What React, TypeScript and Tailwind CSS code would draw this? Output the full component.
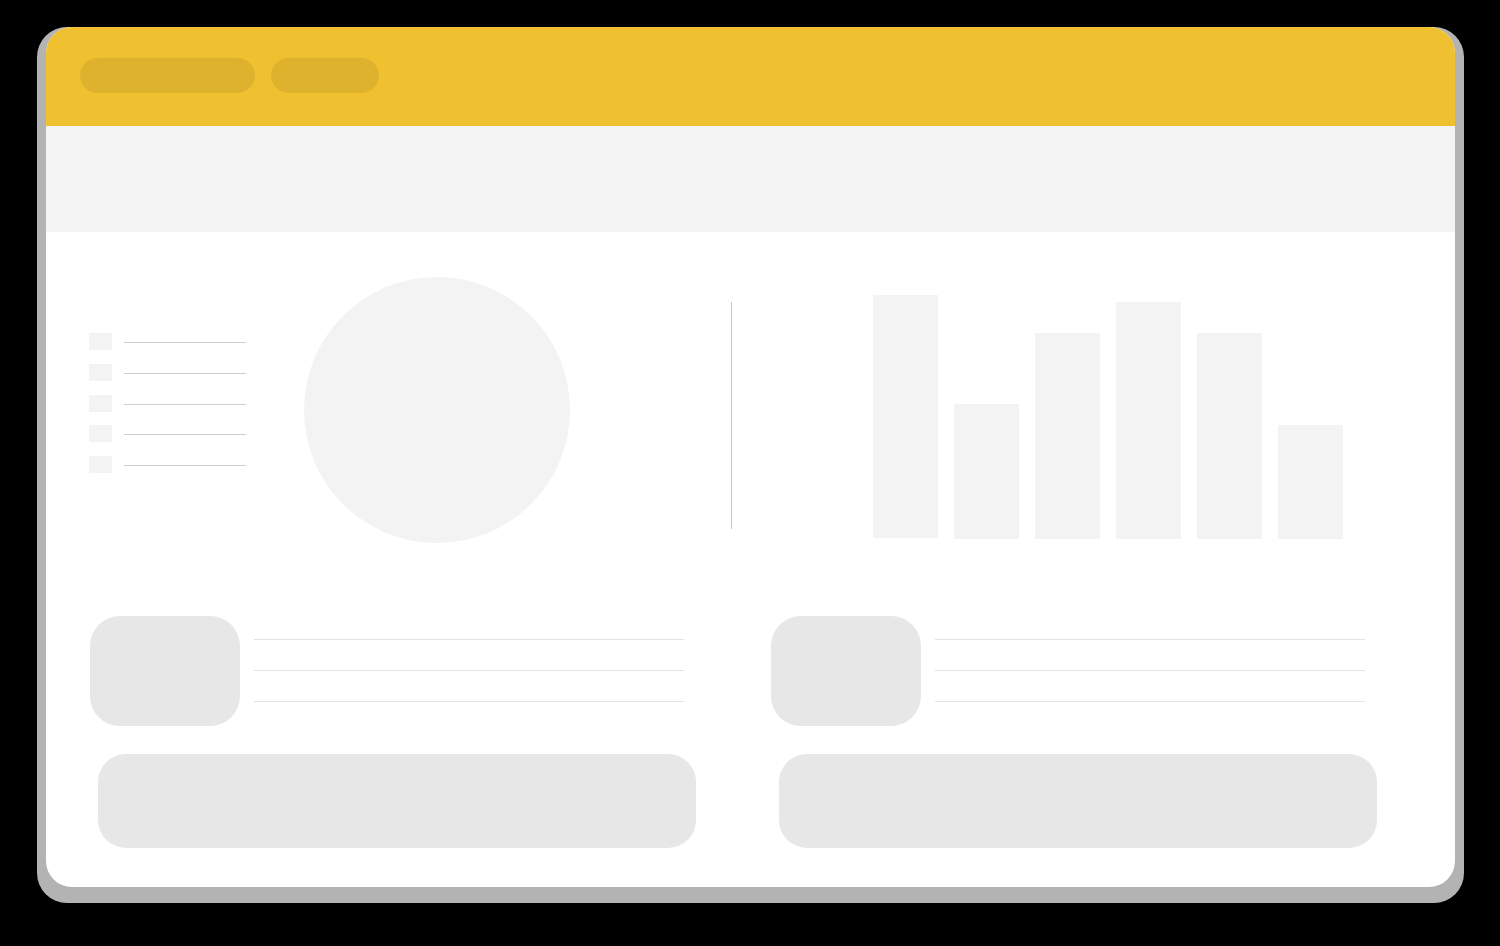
import React from "react";

// top margin of each legend row (pitch is 31/31/30/31 in the mock)
const legend = ["mt-0", "mt-[14px]", "mt-[14px]", "mt-[13px]", "mt-[14px]"];
const bars = [
  { h: "h-[243px] mb-px" },
  { h: "h-[135px]" },
  { h: "h-[206px]" },
  { h: "h-[237px]" },
  { h: "h-[206px]" },
  { h: "h-[114px]" },
];

function InfoBlock() {
  return (
    <div className="flex w-[606px] flex-col">
      <div className="flex">
        <div className="h-[110px] w-[150px] rounded-[30px] bg-[#e7e7e7]" />
        {/* text placeholder lines */}
        <div className="ml-[14px] flex flex-col gap-[30px] pt-[23px]">
          <div className="h-px w-[430px] bg-[#e3e3e3]" />
          <div className="h-px w-[430px] bg-[#e3e3e3]" />
          <div className="h-px w-[430px] bg-[#e3e3e3]" />
        </div>
      </div>
      <div className="ml-[8px] mt-[28px] h-[94px] w-[598px] rounded-[28px] bg-[#e7e7e7]" />
    </div>
  );
}

export default function App() {
  return (
    <div className="h-[946px] w-[1500px] overflow-hidden bg-black pt-[27px] pl-[37px]">
      {/* shadow frame */}
      <div className="h-[876px] w-[1427px] rounded-[30px] bg-[#b3b3b3]">
        <div className="ml-[9px] h-[860px] w-[1409px] overflow-hidden rounded-[26px] bg-white">
          {/* top bar */}
          <div className="flex h-[99px] gap-4 bg-[#efc130] pl-[34px] pt-[31px]">
            <div className="h-[35px] w-[175px] rounded-full bg-[#dfb22e]" />
            <div className="h-[35px] w-[108px] rounded-full bg-[#dfb22e]" />
          </div>
          <div className="h-[106px] bg-[#f3f3f3]" />

          {/* charts row */}
          <div className="flex items-start">
            <div className="ml-[43px] mt-[101px] flex flex-col">
              {legend.map((m, i) => (
                <div key={i} className={`flex h-[17px] items-start gap-3 ${m}`}>
                  <div className="h-[17px] w-[23px] bg-[#f3f3f3]" />
                  <div className="mt-[9px] h-px w-[122px] bg-[#cfcfcf]" />
                </div>
              ))}
            </div>
            <div className="ml-[58px] mt-[45px] h-[266px] w-[266px] rounded-full bg-[#f3f3f3]" />
            <div className="ml-[161px] mt-[70px] h-[227px] w-px bg-[#c4c4c4]" />
            <div className="ml-[141px] mt-[63px] flex h-[244px] items-end gap-4">
              {bars.map((b, i) => (
                <div key={i} className={`w-[65px] bg-[#f3f3f3] ${b.h}`} />
              ))}
            </div>
          </div>

          {/* bottom blocks */}
          <div className="ml-[44px] mt-[73px] flex gap-[75px]">
            <InfoBlock />
            <InfoBlock />
          </div>
        </div>
      </div>
    </div>
  );
}
